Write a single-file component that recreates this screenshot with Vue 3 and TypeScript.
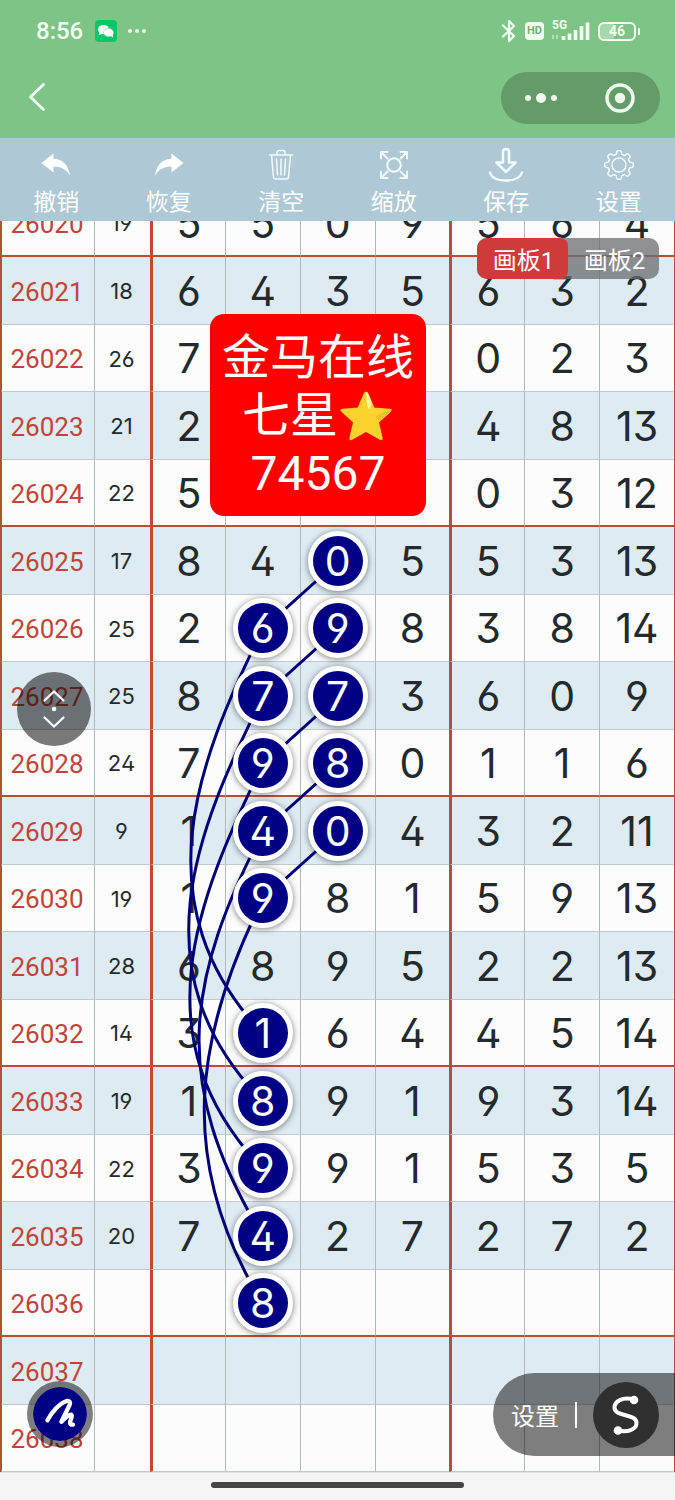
<script setup lang="ts">
interface Draw {
  period: string
  sum: string
  digits: string[]
}

// "-" stands for an empty cell.
const raw: [string, string, string][] = [
  ['26020', '19', '5 5 0 9 5 6 4'],
  ['26021', '18', '6 4 3 5 6 3 2'],
  ['26022', '26', '7 - - - 0 2 3'],
  ['26023', '21', '2 - - - 4 8 13'],
  ['26024', '22', '5 - - - 0 3 12'],
  ['26025', '17', '8 4 0 5 5 3 13'],
  ['26026', '25', '2 6 9 8 3 8 14'],
  ['26027', '25', '8 7 7 3 6 0 9'],
  ['26028', '24', '7 9 8 0 1 1 6'],
  ['26029', '9', '1 4 0 4 3 2 11'],
  ['26030', '19', '1 9 8 1 5 9 13'],
  ['26031', '28', '6 8 9 5 2 2 13'],
  ['26032', '14', '3 1 6 4 4 5 14'],
  ['26033', '19', '1 8 9 1 9 3 14'],
  ['26034', '22', '3 9 9 1 5 3 5'],
  ['26035', '20', '7 4 2 7 2 7 2'],
  ['26036', '', '- 8 - - - - -'],
  ['26037', '', '- - - - - - -'],
  ['26038', '', '- - - - - - -'],
]

const draws: Draw[] = raw.map(([period, sum, line]) => ({
  period,
  sum,
  digits: line.split(' ').map((v) => (v === '-' ? '' : v)),
}))

// Marked cells, written as "row:column".
const marked = new Set([
  '5:2', '6:1', '6:2', '7:1', '7:2', '8:1', '8:2', '9:1', '9:2', '10:1',
  '12:1', '13:1', '14:1', '15:1', '16:1',
])
const isMarked = (r: number, c: number) => marked.has(`${r}:${c}`)

const rowY = (r: number) => 34 + r * 67.5
const bends = [
  { a: [195, 136], b: [142, 276] },
  { a: [195, 136], b: [137, 276] },
  { a: [196, 136], b: [139, 276] },
  { a: [188, 145], b: [168, 249] },
  { a: [195, 136], b: [175, 261] },
]
const links = bends.map(({ a, b }, i) => {
  const y = rowY(6 + i)
  return `M338 ${rowY(5 + i)} L263 ${y} C${a[0]} ${y + a[1]} ${b[0]} ${y + b[1]} 263 ${rowY(12 + i)}`
})
const gearTeeth = [0, 45, 90, 135, 180, 225, 270, 315]
</script>

<template>
  <div class="screen">
    <header class="top">
      <div class="status">
        <div class="status-side">
          <span class="time">8:56</span>
          <svg class="wechat" viewBox="0 0 22 22" aria-hidden="true">
            <rect width="22" height="22" rx="4" fill="#07c868" />
            <ellipse cx="8.500" cy="9.500" rx="5.500" ry="4.500" fill="#fff" />
            <path d="M4.500 12l-.8 3.200 4-1.600z" fill="#fff" />
            <ellipse cx="13.500" cy="12.500" rx="5" ry="4" fill="#fff" stroke="#8fe0b0" stroke-width=".7" />
            <path d="M15 15.500l3 2-.3-3.500z" fill="#fff" />
          </svg>
          <svg class="more" viewBox="0 0 20 6" aria-hidden="true">
            <circle cx="3" cy="3" r="2" /><circle cx="10" cy="3" r="2" /><circle cx="17" cy="3" r="2" />
          </svg>
        </div>
        <div class="status-side right">
          <svg class="bt" viewBox="0 0 16 24" aria-hidden="true">
            <path d="M2 6.500L13 17 8 22V2l5 5L2 17.500" fill="none" stroke="#f2fff2" stroke-width="2.200" stroke-linejoin="round" stroke-linecap="round" />
          </svg>
          <span class="hd">HD</span>
          <span class="signal">
            <span class="net">5G</span>
            <svg viewBox="0 0 38 20" aria-hidden="true">
              <path d="M1 14v4M5 14v4" stroke="#c5e8c9" stroke-width="1.500" />
              <path d="M11.500 15v4M17.500 12.500V19M23.500 9v10M29.500 5v14M35.500 1.500V19" stroke="#f2fff2" stroke-width="3.600" />
            </svg>
          </span>
          <span class="battery"><span>46</span></span>
        </div>
      </div>
      <nav class="nav">
        <button class="back" aria-label="返回">
          <svg viewBox="0 0 18 30"><path d="M15.500 2.500L2.500 15l13 12.500" fill="none" stroke="#f4fff4" stroke-width="2.800" stroke-linecap="round" stroke-linejoin="round" /></svg>
        </button>
        <div class="capsule">
          <button aria-label="更多">
            <svg class="dots" viewBox="0 0 34 12"><circle cx="4" cy="6" r="3" /><circle cx="17" cy="6" r="5" /><circle cx="30" cy="6" r="3" /></svg>
          </button>
          <button aria-label="关闭">
            <svg class="target" viewBox="0 0 30 30"><circle cx="15" cy="15" r="13" fill="none" stroke="#eefaee" stroke-width="3.500" /><circle cx="15" cy="15" r="5.200" fill="#eefaee" /></svg>
          </button>
        </div>
      </nav>
    </header>

    <div class="tools" role="toolbar">
      <button>
        <svg viewBox="0 0 36 36"><path d="M3.500 16L15.500 6.500v5.300C24.500 12 30.500 18 32 28.500 27.500 21.500 22.500 19.500 15.500 19.800v5.700z" fill="#fff" /></svg>
        <span>撤销</span>
      </button>
      <button>
        <svg viewBox="0 0 36 36"><path d="M32.500 16L20.500 6.500v5.300C11.500 12 5.500 18 4 28.500 8.500 21.500 13.500 19.500 20.500 19.800v5.700z" fill="#fff" /></svg>
        <span>恢复</span>
      </button>
      <button>
        <svg viewBox="0 0 36 36" class="line"><path d="M6.500 8h23M14 7.500V5.500q0-2 2-2h4q2 0 2 2v2M8.500 8l2 22q.2 2 2 2h11q1.800 0 2-2l2-22M13.500 12l1 16M18 12v16M22.500 12l-1 16" /></svg>
        <span>清空</span>
      </button>
      <button>
        <svg viewBox="0 0 36 36" class="line zoom"><circle cx="18" cy="18" r="6.800" /><path d="M5 11.500V5h6.500M5.500 5.500l6 6M24.500 5H31v6.500M30.500 5.500l-6 6M5 24.500V31h6.500M5.500 30.500l6-6M24.500 31H31v-6.500M30.500 30.500l-6-6" /></svg>
        <span>缩放</span>
      </button>
      <button>
        <svg viewBox="0 0 36 36" class="line bold"><path d="M15 5q0-3 3-3t3 3v10.500h6.500L18 25 8.500 15.500H15zM2 25.500Q4.500 33.500 18 33.500t16-8" /></svg>
        <span>保存</span>
      </button>
      <button>
        <svg viewBox="0 0 36 36" class="line">
          <circle cx="18" cy="18" r="7" />
          <path v-for="a in gearTeeth" :key="a" :transform="`rotate(${a} 18 18)`" d="M13.800 7.900L15.300 7.300Q15.600 3.800 16.600 3.800h2.800Q20.400 3.800 20.700 7.300l1.500.6" />
        </svg>
        <span>设置</span>
      </button>
    </div>

    <main class="board">
      <div class="sheet">
        <table>
          <colgroup>
            <col class="c-period" /><col class="c-sum" /><col v-for="n in 7" :key="n" />
          </colgroup>
          <tbody>
            <tr v-for="(d, r) in draws" :key="d.period">
              <th scope="row">{{ d.period }}</th>
              <td class="sum">{{ d.sum }}</td>
              <td v-for="(v, c) in d.digits" :key="c" class="num">
                <span v-if="isMarked(r, c)" class="mark">{{ v }}</span>
                <template v-else>{{ v }}</template>
              </td>
            </tr>
          </tbody>
        </table>
        <svg class="links" viewBox="0 0 675 1282" preserveAspectRatio="none" aria-hidden="true">
          <path v-for="(p, i) in links" :key="i" :d="p" />
        </svg>
      </div>

      <div class="tabs">
        <button class="on">画板1</button>
        <button>画板2</button>
      </div>

      <div class="note">
        <div>金马在线</div>
        <div class="mid">
          七星
          <svg viewBox="0 0 56 56" role="img" aria-label="星">
            <path d="M28 3.500q1.500 0 2.300 2l6 14 15.500 1.300q3.200.6.900 3L41 34.500l3.700 15.600q.4 3-2.500 1.800L28 44 13.800 51.900q-2.900 1.200-2.500-1.800L15 34.500 3.300 23.800q-2.300-2.400.9-3L19.700 19.500l6-14q.8-2 2.300-2z" fill="#fdd22f" />
            <path d="M28 4q1.500 0 2.300 2l3.500 8.500q-1 6-3.300 6.500-2-4-2.500-17z" fill="#fff3a0" />
            <path d="M52.700 23.800L43 32.500q-5-1-5-4 6-5 15.200-6.500 0 1-.5 1.800z" fill="#f0c22c" />
          </svg>
        </div>
        <div>74567</div>
      </div>

      <button class="float scroll" aria-label="上下滚动">
        <svg viewBox="0 0 24 40"><path d="M2.500 11.500L12 2.500l9.500 9M2.500 28.500l9.500 9 9.500-9" fill="none" stroke="#fff" stroke-width="2.200" stroke-linecap="round" /><circle cx="12" cy="20" r="2.300" fill="#fff" /></svg>
      </button>

      <button class="float pen" aria-label="画笔">
        <svg viewBox="0 0 56 56"><path d="M15 34.500C19 27 27 17 35 14.500q4.500-.5 3 4L29.500 36q5-5.500 8.500-7 3-1 2 2.500l-1.500 4.500q-.5 3.500 3 3" fill="none" stroke="#fff" stroke-width="4.500" stroke-linecap="round" stroke-linejoin="round" /></svg>
      </button>

      <div class="dock">
        <button class="dock-set">设置</button>
        <span class="bar"></span>
        <button class="curve" aria-label="曲线">
          <svg viewBox="0 0 66 66"><path d="M41 17.500C29 14 21.500 20 21.500 25.500c0 10 22 5.500 22 15.500 0 7-9 9.500-19 7.500" fill="none" stroke="#fff" stroke-width="4" stroke-linecap="round" /><circle cx="41" cy="18" r="4.300" fill="#fff" /><circle cx="25" cy="48.500" r="4.300" fill="#fff" /></svg>
        </button>
      </div>
    </main>

    <footer class="home"><span></span></footer>
  </div>
</template>

<style>
body {
  margin: 0;
  background: #f5f5f5;
}
</style>

<style scoped>
.screen {
  font-family: Roboto, "Noto Sans CJK SC", sans-serif;
  display: flex;
  flex-direction: column;
  min-height: 100vh;
  overflow: hidden;
}
button {
  border: 0;
  padding: 0;
  margin: 0;
  background: none;
  color: #fff;
  font: inherit;
  cursor: pointer;
}
svg {
  display: block;
}
.top {
  background: #7ec487;
  color: #f2fff2;
}
.status {
  height: 62px;
  padding: 0 36px;
  display: flex;
  align-items: center;
  justify-content: space-between;
}
.status-side {
  display: flex;
  align-items: center;
  gap: 12px;
}
.status-side.right {
  gap: 8px;
}
.time {
  font-size: 24px;
  font-weight: 500;
}
.wechat {
  width: 22px;
  height: 22px;
}
.more {
  width: 20px;
  height: 6px;
  margin-left: -2px;
  fill: #e6f7e6;
}
.bt {
  width: 16px;
  height: 24px;
}
.hd {
  width: 19px;
  height: 18px;
  border-radius: 4px;
  background: #f2fff2;
  color: #6fae78;
  font-size: 11px;
  font-weight: 700;
  line-height: 18px;
  text-align: center;
}
.signal {
  position: relative;
  width: 38px;
  height: 20px;
}
.signal svg {
  width: 38px;
  height: 20px;
}
.net {
  position: absolute;
  left: 0;
  top: -3px;
  font-size: 12px;
  font-weight: 700;
  line-height: 14px;
}
.battery {
  position: relative;
  box-sizing: border-box;
  width: 38px;
  height: 19px;
  margin-right: 3px;
  border: 2px solid #f2fff2;
  border-radius: 6px;
  background: linear-gradient(90deg, #a6d8ab 42%, transparent 42%);
  font-size: 14px;
  font-weight: 700;
  line-height: 15px;
  text-align: center;
}
.battery::after {
  content: "";
  position: absolute;
  right: -6px;
  top: 4px;
  width: 2px;
  height: 7px;
  border-radius: 1px;
  background: #f2fff2;
}
.nav {
  height: 76px;
  padding: 0 15px 0 28px;
  display: flex;
  align-items: flex-start;
  justify-content: space-between;
}
.back {
  margin-top: 20px;
}
.back svg {
  width: 18px;
  height: 30px;
}
.capsule {
  margin-top: 10px;
  width: 159px;
  height: 52px;
  border-radius: 26px;
  background: #639b69;
  display: flex;
}
.capsule button {
  flex: 1;
  display: flex;
  align-items: center;
  justify-content: center;
}
.dots {
  width: 34px;
  height: 12px;
  fill: #eefaee;
}
.target {
  width: 30px;
  height: 30px;
}
.tools {
  position: relative;
  z-index: 5;
  height: 83px;
  background: #aec8d5;
  display: grid;
  grid-template-columns: repeat(6, 1fr);
}
.tools button {
  display: flex;
  flex-direction: column;
  align-items: center;
  padding-top: 9px;
  font-size: 23px;
  line-height: 38px;
}
.tools svg {
  width: 36px;
  height: 36px;
}
.tools span {
  margin-top: 1px;
}
.line {
  fill: none;
  stroke: #f2fbff;
  stroke-width: 1.500;
  stroke-linecap: round;
  stroke-linejoin: round;
}
.line.zoom {
  stroke-width: 2;
}
.line.bold {
  stroke-width: 2.500;
}
.board {
  position: relative;
  overflow: hidden;
}
.sheet {
  position: relative;
  margin-top: -31px;
}
table {
  width: 100%;
  table-layout: fixed;
  border-collapse: separate;
  border-spacing: 0;
  border-left: 1px solid #b65035;
  border-right: 1px solid #b65035;
  box-sizing: border-box;
}
.c-period {
  width: 93px;
}
.c-sum {
  width: 56px;
}
th,
td {
  box-sizing: border-box;
  height: 67px;
  padding: 0;
  text-align: center;
  vertical-align: middle;
  background: #fcfcfc;
  border-left: 1px solid #b2b7b9;
  border-bottom: 1px solid #c3cacd;
  color: #222a2e;
}
tr:nth-child(even) > * {
  height: 68px;
  background: #deebf3;
}
tr:nth-child(4n + 1) > * {
  border-bottom: 2px solid #b65035;
}
th {
  padding: 2px 2px 0 0;
  border-left-color: #b65035;
  color: #c0443a;
  font-size: 26px;
  font-weight: 400;
}
.sum,
.num {
  font-family: Inter, Roboto, sans-serif;
  font-feature-settings: "ss01", "cv03", "cv04";
}
.sum {
  padding: 1px 2px 0 0;
  font-size: 22px;
}
.num {
  font-size: 41px;
  line-height: 50px;
}
td:nth-child(3),
td:nth-child(7) {
  border-left: 3px solid #b65035;
}
.mark {
  position: relative;
  z-index: 2;
  display: block;
  box-sizing: border-box;
  width: 60px;
  height: 60px;
  margin: 0 auto;
  border: 5px solid #fff;
  border-radius: 50%;
  background: #000084;
  box-shadow: 0 1px 6px rgba(0, 0, 0, 0.5);
  color: #fff;
  line-height: 50px;
}
.links {
  position: absolute;
  z-index: 1;
  left: 0;
  top: 0;
  width: 100%;
  height: 100%;
  fill: none;
  stroke: #000078;
  stroke-width: 3;
  pointer-events: none;
}
.tabs {
  position: absolute;
  z-index: 3;
  top: 17px;
  right: 16px;
  display: flex;
  border-radius: 10px;
  overflow: hidden;
  background: rgba(105, 108, 112, 0.75);
}
.tabs button {
  box-sizing: border-box;
  width: 91px;
  height: 41px;
  padding: 6px 0 0 2px;
  font-size: 24px;
  line-height: 35px;
}
.tabs .on {
  background: #cf3a3b;
  border-radius: 0 8px 8px 0;
}
.note {
  position: absolute;
  z-index: 3;
  left: 210px;
  top: 93px;
  padding: 15px 12px 13px;
  border-radius: 14px;
  background: #fe0000;
  color: #fff;
  font-size: 48px;
  line-height: 58px;
  text-align: center;
}
.mid {
  display: flex;
  justify-content: center;
  align-items: center;
  height: 58px;
}
.mid svg {
  width: 56px;
  height: 56px;
}
.float {
  position: absolute;
  z-index: 4;
  display: flex;
  align-items: center;
  justify-content: center;
  border-radius: 50%;
}
.scroll {
  left: 17px;
  top: 451px;
  width: 74px;
  height: 74px;
  background: rgba(0, 0, 0, 0.52);
}
.scroll svg {
  width: 24px;
  height: 40px;
}
.pen {
  left: 27px;
  bottom: 25px;
  box-sizing: border-box;
  width: 66px;
  height: 66px;
  border: 6px solid rgba(0, 0, 0, 0.5);
  background: #000084;
  background-clip: padding-box;
}
.pen svg {
  width: 56px;
  height: 56px;
}
.dock {
  position: absolute;
  z-index: 4;
  right: 0;
  bottom: 16px;
  height: 83px;
  padding: 0 16px 0 18px;
  border-radius: 42px 0 0 42px;
  background: rgba(0, 0, 0, 0.5);
  display: flex;
  align-items: center;
  gap: 16px;
}
.dock-set {
  font-size: 24px;
}
.bar {
  width: 2px;
  height: 26px;
  background: #fff;
}
.curve {
  width: 66px;
  height: 66px;
  border-radius: 50%;
  background: #303030;
}
.curve svg {
  width: 66px;
  height: 66px;
}
.home {
  flex: 1;
  min-height: 28px;
  box-sizing: border-box;
  border-top: 1px solid #e2e2e2;
  background: #f5f5f5;
  display: flex;
  justify-content: center;
  padding-top: 9px;
}
.home span {
  width: 253px;
  height: 6px;
  border-radius: 3px;
  background: #454545;
}
</style>
